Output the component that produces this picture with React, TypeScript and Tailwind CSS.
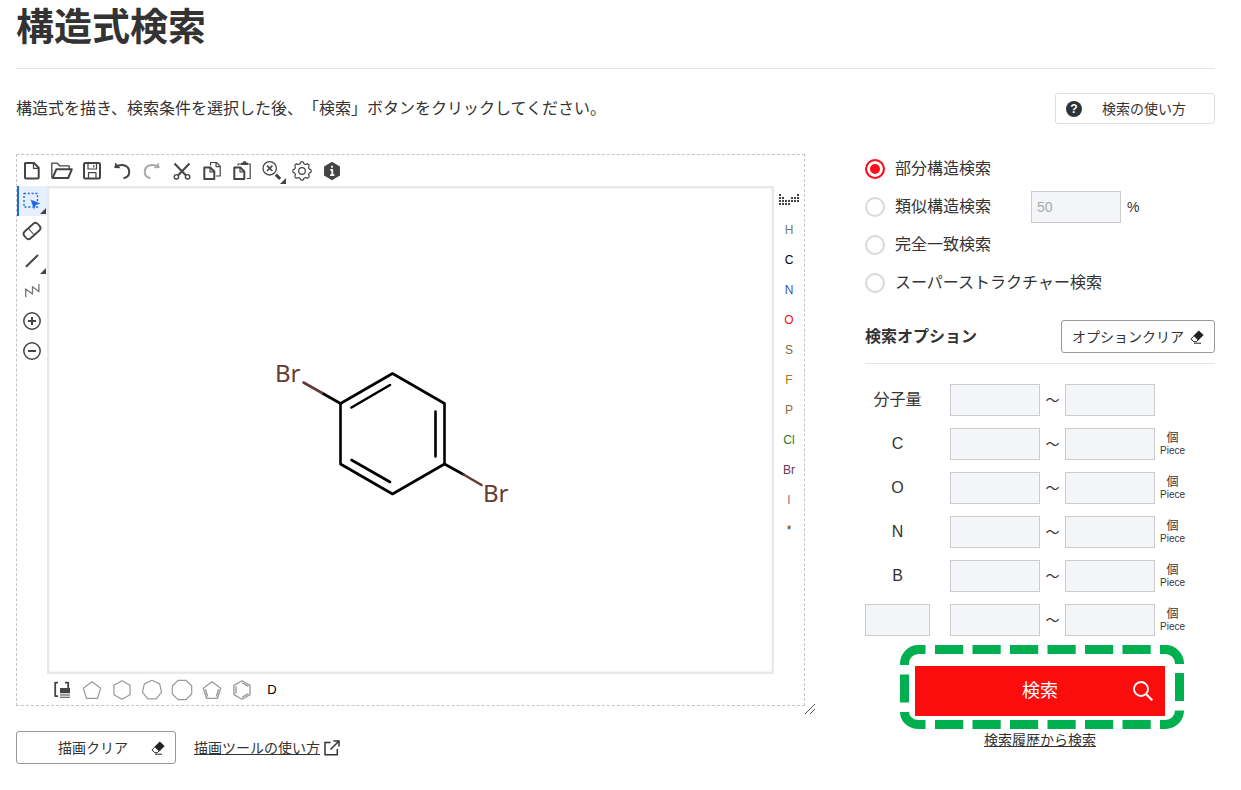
import { useState } from 'react';
import type { ReactNode } from 'react';

const SEARCH_TYPES = [
  { id: 'substructure', label: '部分構造検索' },
  { id: 'similarity', label: '類似構造検索' },
  { id: 'exact', label: '完全一致検索' },
  { id: 'superstructure', label: 'スーパーストラクチャー検索' },
];

const ATOMS = [
  { symbol: 'H', color: 'text-[#777777]' },
  { symbol: 'C', color: 'text-black' },
  { symbol: 'N', color: 'text-[#3a5a9c]' },
  { symbol: 'O', color: 'text-[#ff0d0d]' },
  { symbol: 'S', color: 'text-[#7a6a4a]' },
  { symbol: 'F', color: 'text-[#a07a30]' },
  { symbol: 'P', color: 'text-[#8f6a3a]' },
  { symbol: 'Cl', color: 'text-[#1f7a1f]' },
  { symbol: 'Br', color: 'text-[#653a54]' },
  { symbol: 'I', color: 'text-[#a06a80]' },
  { symbol: '*', color: 'text-[#333333]' },
];

const RANGES = ['分子量', 'C', 'O', 'N', 'B', ''];

// Periodic table glyph: [first row, last row] of dots for each column
const TABLE_COLUMNS = [[0, 3], [1, 3], [2, 3], [2, 3], [1, 2], [1, 2], [0, 2]];

function ring(sides: number, r: number, start = -90, cx = 12, cy = 12) {
  return Array.from({ length: sides }, (_, i) => {
    const a = ((start + (360 / sides) * i) * Math.PI) / 180;
    return `${(cx + r * Math.cos(a)).toFixed(2)},${(cy + r * Math.sin(a)).toFixed(2)}`;
  }).join(' ');
}

const gearPoints = Array.from({ length: 96 }, (_, i) => {
  const a = (i / 96) * Math.PI * 2;
  const r = 8.3 + 0.9 * Math.tanh(2.5 * Math.cos(a * 8));
  return `${(12 + r * Math.cos(a)).toFixed(2)},${(12 + r * Math.sin(a)).toFixed(2)}`;
}).join(' ');

function Glyph({ children }: { children: ReactNode }) {
  return (
    <svg viewBox="0 0 24 24" className="w-6 h-6" fill="none" stroke="currentColor" strokeWidth="2" strokeLinejoin="round" aria-hidden="true">
      {children}
    </svg>
  );
}

interface ToolProps {
  label: string;
  children: ReactNode;
  className?: string;
  menu?: boolean;
}

function Tool({ label, children, className = 'text-[#444444]', menu }: ToolProps) {
  return (
    <button type="button" aria-label={label} className={`relative w-[30px] h-[30px] shrink-0 flex items-center justify-center ${className}`}>
      {children}
      {menu && (
        <svg viewBox="0 0 6 6" className="absolute right-px bottom-0.5 w-1.5 h-1.5 text-[#444444]" fill="currentColor" aria-hidden="true">
          <path d="M6 0v6H0z" />
        </svg>
      )}
    </button>
  );
}

function EraserIcon() {
  return (
    <svg viewBox="0 0 14 14" className="w-3.5 h-3.5 text-[#222222]" aria-hidden="true">
      <path d="M8.8 .4 13.6 5 8.3 10.4 3.4 5.8z" fill="currentColor" />
      <path d="M3.6 6.2 1 8.9l2.7 2.8h2.6l1.8-1.8M4 13.2h7" fill="none" stroke="currentColor" />
    </svg>
  );
}

function TopToolbar() {
  return (
    <div className="flex h-[31px] items-center">
      <Tool label="New">
        <Glyph><path d="M5.5 4H14l4.7 4.8v9.7a1 1 0 0 1-1 1H6a1 1 0 0 1-1-1V4.5z" /><path d="M13.5 4v5.3h5" strokeWidth="1.3" /></Glyph>
      </Tool>
      <Tool label="Open">
        <Glyph><path d="M1.8 18.5V4.2h5.4l2.5 2.6h9.5V10" strokeWidth="1.3" /><path d="M6.3 10.3h15.5l-3.6 8.7H2.6z" /></Glyph>
      </Tool>
      <Tool label="Save">
        <Glyph><rect x="4" y="4" width="16" height="15.5" rx="1.5" /><path d="M8 4v6h8.5V4M8.5 19.5v-5.8h7.5v5.8M13.8 6v2.5" strokeWidth="1.2" /></Glyph>
      </Tool>
      <Tool label="Undo">
        <Glyph><path d="M7 7.3c6-3 12.2-.3 12.2 5.4 0 3.4-2.3 5.8-5.7 6.5" /><path d="M5.5 3.5 4.2 9l6.3.3z" fill="currentColor" stroke="none" /></Glyph>
      </Tool>
      <Tool label="Redo" className="text-[#aaaaaa]">
        <Glyph><path d="M17 7.3c-6-3-12.2-.3-12.2 5.4 0 3.4 2.3 5.8 5.7 6.5" /><path d="M18.5 3.5 19.8 9l-6.3.3z" fill="currentColor" stroke="none" /></Glyph>
      </Tool>
      <Tool label="Cut">
        <Glyph><path d="m4.5 4.5 11.3 11.8M19.5 4.5 8.2 16.3" /><circle cx="6.4" cy="17.8" r="2.2" strokeWidth="1.4" /><circle cx="17.6" cy="17.8" r="2.2" strokeWidth="1.4" /></Glyph>
      </Tool>
      <Tool label="Copy">
        <Glyph><path d="M4.3 8.5h6l4 4V20h-10z" /><path d="M10 8.8v4h4" strokeWidth="1.2" /><path d="M10.5 6.5v-3h6l3.7 3.7V17H16M16 3.8v3.8h4" strokeWidth="1.2" /></Glyph>
      </Tool>
      <Tool label="Paste">
        <Glyph><path d="M4.3 8.5h6l4 4V20h-10z" /><path d="M10 8.8v4h4" strokeWidth="1.2" /><path d="M8 6.5V5h3M18 5h2.2v14.5H17" strokeWidth="1.2" /><path d="M11 6V3.8h1.8a1.8 1.8 0 0 1 3.6 0H18V6z" fill="currentColor" stroke="none" /></Glyph>
      </Tool>
      <Tool label="Zoom" menu>
        <Glyph><circle cx="9.7" cy="9.3" r="6.7" strokeWidth="1.3" /><path d="m7 6.6 5.4 5.4m0-5.4L7 12" strokeWidth="1.6" /><path d="m15.8 15.6 4.4 4.2" strokeWidth="3" /></Glyph>
      </Tool>
      <Tool label="Settings">
        <Glyph><polygon points={gearPoints} strokeWidth="1.2" /><circle cx="12" cy="12" r="3.3" strokeWidth="1.2" /></Glyph>
      </Tool>
      <Tool label="About">
        <Glyph><polygon points={ring(6, 9.2)} fill="currentColor" stroke="none" /><path d="M10.3 10.8h2v5.4M10 16.2h4.4M12 6.8v2" stroke="white" strokeWidth="1.8" /></Glyph>
      </Tool>
    </div>
  );
}

function LeftToolbar() {
  return (
    <div className="flex w-[30px] shrink-0 flex-col">
      <Tool label="Select" menu className="bg-[#e6effc] text-[#1f66e5] border-l-2 border-[#1f66e5]">
        <Glyph><rect x="3" y="4.5" width="13.5" height="13.5" strokeWidth="1.4" strokeDasharray="2 1.8" /><path d="m9.3 10.3 10.8 4.2-5 1.6-2.2 4.8z" fill="currentColor" stroke="white" strokeWidth=".4" /></Glyph>
      </Tool>
      <Tool label="Erase">
        <Glyph><g transform="rotate(-42 12 12)"><rect x="3" y="7.5" width="18" height="9" rx="3.2" strokeWidth="1.8" /><path d="M11 7.5v9" strokeWidth="1" /></g></Glyph>
      </Tool>
      <Tool label="Single bond" menu>
        <Glyph><path d="M6.5 17.3 17.5 6.5" strokeLinecap="round" /></Glyph>
      </Tool>
      <Tool label="Chain" className="text-[#777777]">
        <Glyph><path d="M5.7 18.3V10l6.8 5V7.7l6.4 4.8V5" strokeWidth="1.3" /></Glyph>
      </Tool>
      <Tool label="Increase charge">
        <Glyph><circle cx="12" cy="12" r="8.2" strokeWidth="1.5" /><path d="M8 12h8M12 8v8" /></Glyph>
      </Tool>
      <Tool label="Decrease charge">
        <Glyph><circle cx="12" cy="12" r="8.2" strokeWidth="1.5" /><path d="M8 12h8" /></Glyph>
      </Tool>
    </div>
  );
}

function AtomToolbar() {
  return (
    <div className="flex w-[30px] shrink-0 flex-col">
      <Tool label="Periodic table">
        <Glyph>
          {TABLE_COLUMNS.map(([from, to], col) =>
            [0, 1, 2, 3].filter((row) => row >= from && row <= to).map((row) => (
              <rect key={`${col}-${row}`} x={2 + col * 3} y={5 + row * 3} width="2" height="2" fill="currentColor" stroke="none" />
            ))
          )}
        </Glyph>
      </Tool>
      {ATOMS.map((a) => (
        <Tool key={a.symbol} label={a.symbol} className={`pb-0.5 text-xs ${a.color}`}>{a.symbol}</Tool>
      ))}
    </div>
  );
}

function RingToolbar() {
  return (
    <div className="flex h-[31px] items-end pl-[30px]">
      <Tool label="Group">
        <Glyph><path d="M8 4.7H5.2v13.4H8M15 4.7h3.2V10" strokeWidth="1.8" /><path d="M10 10h10v5.3H10zM10 16.5h10v1H10zM10 18.7h10v1H10z" fill="currentColor" stroke="none" /></Glyph>
      </Tool>
      <Tool label="Cyclopentane" className="text-[#999999]"><Glyph><polygon points={ring(5, 9.2, -90, 12, 13)} strokeWidth="1.2" /></Glyph></Tool>
      <Tool label="Cyclohexane" className="text-[#999999]"><Glyph><polygon points={ring(6, 9.3)} strokeWidth="1.2" /></Glyph></Tool>
      <Tool label="Cycloheptane" className="text-[#999999]"><Glyph><polygon points={ring(7, 9.8)} strokeWidth="1.2" /></Glyph></Tool>
      <Tool label="Cyclooctane" className="text-[#999999]"><Glyph><polygon points={ring(8, 10.5, 22.5)} strokeWidth="1.2" /></Glyph></Tool>
      <Tool label="Cyclopentadiene" className="text-[#999999]">
        <Glyph><polygon points={ring(5, 9.2, -90, 12, 13)} strokeWidth="1.3" /><path d="m5.4 11.2 2.3 7.4M18.6 11.2l-2.3 7.4" strokeWidth="1.3" /></Glyph>
      </Tool>
      <Tool label="Benzene" className="text-[#999999]">
        <Glyph><polygon points={ring(6, 9.3)} strokeWidth="1.3" /><path d="M6 8.3v7.4M12 4.7l6.4 3.7M12 19.3l6.4-3.7" strokeWidth="1.3" /></Glyph>
      </Tool>
      <Tool label="D" className="text-[13px] text-black">D</Tool>
    </div>
  );
}

// 1,4-dibromobenzene
function Molecule() {
  return (
    <svg viewBox="-10 -20 280 180" className="absolute left-[215px] top-[156px] w-[280px] h-[180px]" fill="none" stroke="black" strokeWidth="2.6" strokeLinecap="round" strokeLinejoin="round" role="img" aria-label="1,4-dibromobenzene">
      <polygon points="118.5,9.5 170.5,39.5 170.5,100 118.5,130 66.5,100 66.5,39.5" />
      <path d="M77.5 43.5 116 21M161.5 47.5v45M77.5 96l38.5 22" />
      <path d="M66.5 39.5 48 29M170.5 100l19 10.5" />
      <path d="M48 29 29.5 18.5M189.5 110.5 207.5 121" stroke="#653a34" />
      <g fill="#653a34" stroke="none" fontFamily="'Noto Sans', sans-serif" fontSize="24">
        <text x="1" y="18">Br</text>
        <text x="209" y="138">Br</text>
      </g>
    </svg>
  );
}

function Editor() {
  return (
    <div className="relative border border-dashed border-[#c4c4c4]">
      <TopToolbar />
      <div className="flex">
        <LeftToolbar />
        <div className="relative h-[488px] flex-1 border-2 border-[#e8e8e8] shadow-[inset_0_0_2px_#dddddd]">
          <Molecule />
        </div>
        <AtomToolbar />
      </div>
      <RingToolbar />
      <svg viewBox="0 0 12 12" className="absolute -right-3 -bottom-2.5 w-3 h-3" stroke="#555555" aria-hidden="true">
        <path d="M1 11 11 1M6 11l5-5" />
      </svg>
    </div>
  );
}

const fieldClass = 'h-8 rounded-none border border-[#cccccc] bg-[#f4f5f9] px-[5px] text-sm outline-none placeholder:text-[#aaaaaa]';

function SearchPanel() {
  const [type, setType] = useState('substructure');

  return (
    <form className="w-[350px] shrink-0" onSubmit={(e) => e.preventDefault()}>
      <div className="flex flex-col gap-2">
        {SEARCH_TYPES.map((t) => (
          <div key={t.id} className="flex h-[30px] items-center">
            <label className="flex items-center gap-2.5">
              <input
                type="radio"
                name="searchType"
                checked={type === t.id}
                onChange={() => setType(t.id)}
                className="h-5 w-5 appearance-none rounded-full border-2 border-[#d8d8d8] bg-white checked:border-[#fc0d1b] checked:bg-[#fc0d1b] checked:shadow-[inset_0_0_0_3px_white]"
              />
              {t.label}
            </label>
            {t.id === 'similarity' && (
              <label className="ml-10 flex items-center gap-1.5 text-sm">
                <input type="text" placeholder="50" aria-label="類似度" className={`w-[90px] ${fieldClass}`} />
                %
              </label>
            )}
          </div>
        ))}
      </div>

      <div className="mt-[22px] flex items-center justify-between border-b border-[#e5e5e5] pb-2.5">
        <h2 className="font-bold">検索オプション</h2>
        <button type="button" className="flex h-[33px] items-center gap-1.5 rounded-[3px] border border-[#999999] px-2.5 text-sm">
          オプションクリア <EraserIcon />
        </button>
      </div>

      <div className="mt-5 flex flex-col gap-3">
        {RANGES.map((name, i) => (
          <div key={i} className="flex h-8 items-center">
            {name ? (
              <span className="w-[65px] text-center">{name}</span>
            ) : (
              <input type="text" aria-label="元素" className={`w-[65px] ${fieldClass}`} />
            )}
            <input type="text" aria-label={`${name} 最小`} className={`ml-5 w-[90px] ${fieldClass}`} />
            <span className="w-[25px] text-center text-sm">～</span>
            <input type="text" aria-label={`${name} 最大`} className={`w-[90px] ${fieldClass}`} />
            {i > 0 && (
              <span className="ml-[5px] flex flex-col items-center">
                <span className="text-xs leading-[14px]">個</span>
                <span className="text-[10px] leading-3">Piece</span>
              </span>
            )}
          </div>
        ))}
      </div>

      <div className="relative mx-auto mt-[30px] w-[250px]">
        <button type="submit" className="relative block h-[50px] w-full bg-[#fc0d0d] text-lg text-white">
          検索
          <svg viewBox="0 0 20 20" className="absolute right-3 top-[15px] h-5 w-5" fill="none" stroke="currentColor" strokeWidth="1.8" aria-hidden="true">
            <circle cx="8" cy="8" r="7" />
            <path d="m13 13 6.3 6.3" strokeWidth="2.2" />
          </svg>
        </button>
        <svg viewBox="0 0 284 84" className="pointer-events-none absolute -left-[15px] -top-[21px] h-[84px] w-[284px] max-w-none" fill="none" stroke="#00b050" strokeWidth="9" aria-hidden="true">
          <path d="M25.5 4.5h-7a14 14 0 0 0-14 14V20M260 4.5h5.500a14 14 0 0 1 14 14V19M4.500 67a14 12.500 0 0 0 14 12.500h7M260 79.500h5.500a14 14 0 0 0 14-14" />
          <path d="M35 4.500h216M35 79.500h216" strokeDasharray="28.200 9.300" />
          <path d="M4.500 29.500v28M279.500 28v28" />
        </svg>
      </div>
      <p className="mt-3.5 text-center text-sm leading-5">
        <a href="#history" className="underline">検索履歴から検索</a>
      </p>
    </form>
  );
}

export default function App() {
  return (
    <div className="bg-white pl-4 pr-[26px] pb-6 font-['Liberation_Sans','Noto_Sans_CJK_JP',sans-serif] text-base text-[#333333]">
      <h1 className="border-b border-[#e5e5e5] pb-3.5 text-[38px] font-bold leading-[54px]">構造式検索</h1>

      <div className="mt-6 flex items-center justify-between">
        <p className="[text-spacing-trim:space-all]">構造式を描き、検索条件を選択した後、「検索」ボタンをクリックしてください。</p>
        <button type="button" className="flex h-[31px] w-40 items-center gap-5 rounded-[3px] border border-[#dddddd] pl-2.5 text-sm">
          <span className="flex h-4 w-4 items-center justify-center rounded-full bg-[#2b333b] text-xs font-bold text-white">?</span>
          検索の使い方
        </button>
      </div>

      <div className="mt-[30px] flex items-start gap-[60px]">
        <div className="min-w-0 flex-1">
          <Editor />
          <div className="mt-[25px] flex items-center gap-[18px] text-sm">
            <button type="button" className="flex h-[33px] w-40 items-center justify-end gap-[23px] rounded-[3px] border border-[#999999] pr-2.5">
              描画クリア <EraserIcon />
            </button>
            <a href="#guide" className="flex items-center gap-1">
              <span className="underline">描画ツールの使い方</span>
              <svg viewBox="0 0 16 16" className="h-4 w-4" fill="none" stroke="currentColor" strokeWidth="1.5" aria-hidden="true">
                <path d="M6.5 2.5H1v12.3h12.3V9M9.5 1H15v5.5M15 1 6.5 9.5" />
              </svg>
            </a>
          </div>
        </div>
        <SearchPanel />
      </div>
    </div>
  );
}
